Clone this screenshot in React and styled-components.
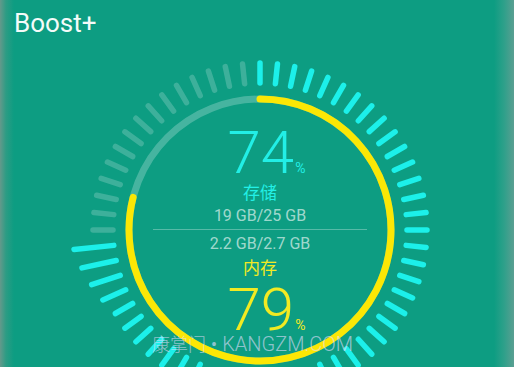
import React from 'react';
import styled, { createGlobalStyle } from 'styled-components';

const GlobalStyle = createGlobalStyle`
  html, body {
    margin: 0;
    padding: 0;
    background: #0d9d82;
  }
`;

const Page = styled.div`
  position: relative;
  width: 514px;
  height: 367px;
  overflow: hidden;
  display: flex;
  flex-direction: column;
  font-family: Roboto, "Noto Sans CJK SC", sans-serif;
  background: linear-gradient(
    to right,
    #64998b 0px,
    #2c9c84 6px,
    #0d9d82 14px,
    #0d9d82 494px,
    #2ea08a 504px,
    #5a9f92 514px
  );
`;

const Title = styled.div`
  margin: 8px 0 0 14px;
  font-size: 26px;
  line-height: 30px;
  font-weight: 400;
  color: #f4fbf9;
`;

const GaugeWrap = styled.div`
  display: grid;
  width: 400px;
  height: 330px;
  margin: 2px 0 0 60px;
`;

const GaugeSvg = styled.svg`
  grid-area: 1 / 1;
  display: block;
`;

const Readout = styled.div`
  grid-area: 1 / 1;
  justify-self: center;
  align-self: start;
  width: 214px;
  padding-top: 82.5px;
  display: flex;
  flex-direction: column;
  align-items: center;
`;

const BigValue = styled.div`
  font-size: 60px;
  line-height: 60px;
  height: 60px;
  font-weight: 300;
  color: ${props => props.color};
  margin-top: ${props => props.gap || 0}px;
  padding-left: 13px;
  white-space: nowrap;
`;

const Percent = styled.span`
  font-size: 14px;
  line-height: 14px;
  font-weight: 400;
  margin-left: 1px;
`;

const Label = styled.div`
  font-size: 17px;
  line-height: 20px;
  color: ${props => props.color};
  margin-top: ${props => props.gap || 0}px;
`;

const Usage = styled.div`
  font-size: 16px;
  line-height: 20px;
  color: rgba(255, 255, 255, 0.62);
  margin-top: ${props => props.gap || 0}px;
`;

const Divider = styled.div`
  width: 214px;
  height: 1px;
  margin-top: 3.5px;
  background: rgba(255, 255, 255, 0.3);
`;

const Watermark = styled.div`
  position: absolute;
  left: 152px;
  top: 333px;
  font-size: 20px;
  line-height: 22px;
  font-weight: 300;
  color: rgba(228, 222, 255, 0.62);
  white-space: nowrap;
`;

const WatermarkCjk = styled.span`
  font-size: 18px;
`;

const CYAN = '#1cf0ea';
const YELLOW = '#fbe705';
const TEXT_CYAN = '#22efe6';
const TEXT_YELLOW = '#f2ea22';

const rad = deg => (deg * Math.PI) / 180;
const pt = (r, deg) => [r * Math.sin(rad(deg)), -r * Math.cos(rad(deg))];

// storage 74% -> cyan ticks up to 264deg, the last few get longer
const leadOuter = { 44: 187, 43: 182, 42: 177, 41: 172 };

const Ticks = () => (
  <g strokeLinecap="round" strokeWidth="5.5">
    {Array.from({ length: 60 }, (_, i) => {
      const deg = i * 6;
      const active = i <= 44;
      const [x1, y1] = pt(147, deg);
      const [x2, y2] = pt(leadOuter[i] || 167, deg);
      return (
        <line
          key={i}
          x1={x1}
          y1={y1}
          x2={x2}
          y2={y2}
          stroke={active ? CYAN : 'rgba(255,255,255,0.2)'}
        />
      );
    })}
  </g>
);

const MemoryArc = ({ percent }) => {
  const r = 131;
  const end = (percent / 100) * 360;
  const [ex, ey] = pt(r, end);
  return (
    <g fill="none" strokeWidth="7">
      <circle cx="0" cy="0" r={r} stroke="rgba(255,255,255,0.24)" />
      <path
        d={`M 0 ${-r} A ${r} ${r} 0 ${end > 180 ? 1 : 0} 1 ${ex} ${ey}`}
        stroke={YELLOW}
        strokeLinecap="round"
      />
    </g>
  );
};

const App = () => (
  <>
    <GlobalStyle />
    <Page>
      <Title>Boost+</Title>
      <GaugeWrap>
        <GaugeSvg width="400" height="330" viewBox="-200 -190 400 330">
          <Ticks />
          <MemoryArc percent={79} />
        </GaugeSvg>
        <Readout>
          <BigValue color={TEXT_CYAN}>
            74<Percent>%</Percent>
          </BigValue>
          <Label color={TEXT_CYAN}>存储</Label>
          <Usage gap={3}>19 GB/25 GB</Usage>
          <Divider />
          <Usage gap={3.5}>2.2 GB/2.7 GB</Usage>
          <Label color={TEXT_YELLOW} gap={4.5}>内存</Label>
          <BigValue color={TEXT_YELLOW} gap={1.5}>
            79<Percent>%</Percent>
          </BigValue>
        </Readout>
      </GaugeWrap>
      <Watermark>
        <WatermarkCjk>康掌门</WatermarkCjk> • KANGZM.COM
      </Watermark>
    </Page>
  </>
);

export default App;
